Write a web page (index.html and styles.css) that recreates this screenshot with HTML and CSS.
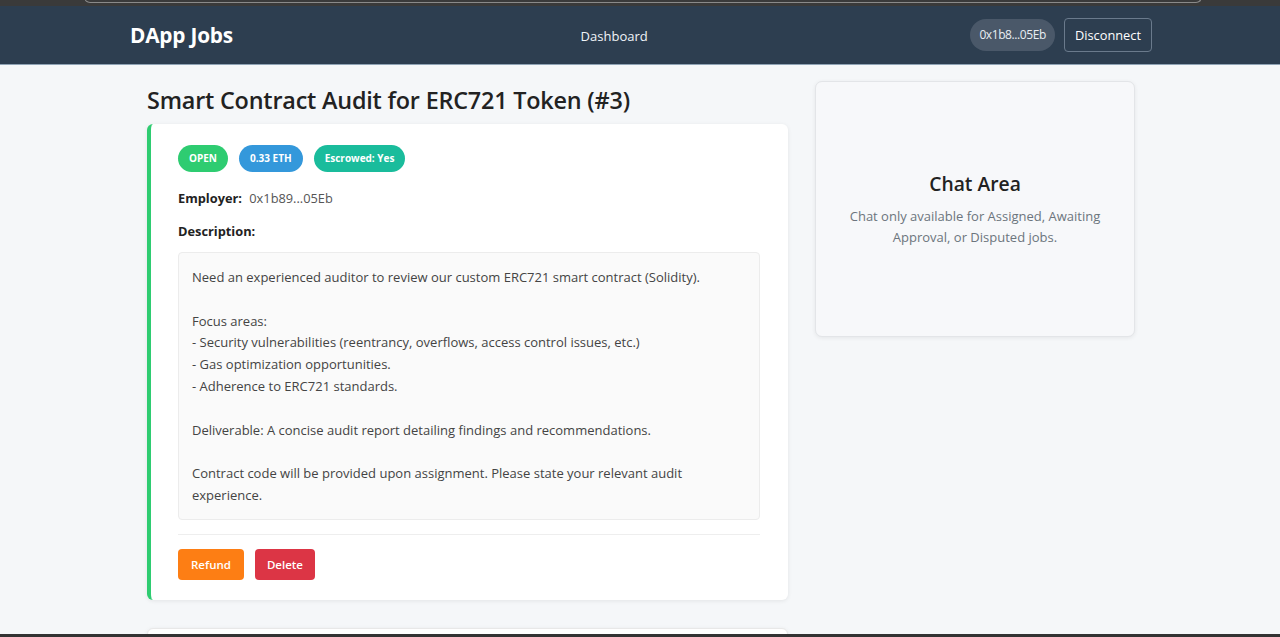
FILE: index.html
```html
<!DOCTYPE html>
<html lang="en">
<head>
<meta charset="utf-8">
<title>DApp Jobs</title>
<link rel="stylesheet" href="styles.css">
</head>
<body>
<div class="chrome-top"><div class="chrome-bar"></div></div>
<header class="topnav">
  <div class="nav-inner">
    <a class="logo">DApp Jobs</a>
    <nav class="nav-links"><a>Dashboard</a></nav>
    <div class="nav-right">
      <span class="addr-pill">0x1b8...05Eb</span>
      <button class="btn-disconnect">Disconnect</button>
    </div>
  </div>
</header>
<main class="page">
  <div class="layout">
    <section class="main-col">
      <h1 class="job-title">Smart Contract Audit for ERC721 Token (#3)</h1>
      <div class="job-card">
        <div class="badges">
          <span class="badge badge-open">OPEN</span>
          <span class="badge badge-eth">0.33 ETH</span>
          <span class="badge badge-escrow">Escrowed: Yes</span>
        </div>
        <p class="meta"><strong>Employer:</strong> <span class="meta-val">0x1b89...05Eb</span></p>
        <p class="meta"><strong>Description:</strong></p>
        <div class="desc">Need an experienced auditor to review our custom ERC721 smart contract (Solidity).

Focus areas:
- Security vulnerabilities (reentrancy, overflows, access control issues, etc.)
- Gas optimization opportunities.
- Adherence to ERC721 standards.

Deliverable: A concise audit report detailing findings and recommendations.

Contract code will be provided upon assignment. Please state your relevant audit experience.</div>
        <div class="actions">
          <button class="btn btn-refund">Refund</button>
          <button class="btn btn-delete">Delete</button>
        </div>
      </div>
      <div class="job-card next-card"></div>
    </section>
    <aside class="side-col">
      <div class="chat-card">
        <h2 class="chat-title">Chat Area</h2>
        <p class="chat-note">Chat only available for Assigned, Awaiting Approval, or Disputed jobs.</p>
      </div>
    </aside>
  </div>
</main>
<div class="chrome-bottom"></div>
</body>
</html>
```

FILE: styles.css
```css
* { box-sizing: border-box; }
html, body { margin: 0; padding: 0; }
body {
  font-family: "Open Sans", "Noto Sans", sans-serif;
  background: #f5f7f9;
  color: #222;
  height: 637px;
  overflow: hidden;
  position: relative;
}
.chrome-top {
  height: 6px;
  background: #3a3a3a;
  position: relative;
}
.chrome-bar {
  position: absolute;
  left: 84px;
  right: 78px;
  top: -6px;
  height: 9px;
  border: 1px solid #8a8a8a;
  border-top: none;
  border-radius: 0 0 6px 6px;
  background: #3a3a3a;
}
.chrome-bottom {
  position: absolute;
  left: 0; right: 0; bottom: 0;
  height: 3px;
  background: #333;
}
.topnav {
  background: #2d3e50;
  height: 59px;
  border-bottom: 1px solid #8fa3b5;
  padding-left: 2px;
}
.nav-inner {
  width: 1022px;
  margin: 0 auto;
  height: 100%;
  display: flex;
  align-items: center;
  justify-content: space-between;
}
.logo {
  color: #fff;
  font-weight: 700;
  font-size: 20.8px;
  letter-spacing: -0.2px;
}
.nav-links { margin-left: 25px; }
.nav-links a {
  color: #f0f4f8;
  font-size: 13px;
}
.nav-right {
  display: flex;
  align-items: center;
  gap: 9px;
}
.addr-pill {
  background: #4a5869;
  color: #e8edf2;
  font-size: 12px;
  padding: 0 9px;
  height: 32px;
  line-height: 32px;
  border-radius: 16px;
  letter-spacing: -0.4px;
}
.btn-disconnect {
  font-family: inherit;
  background: transparent;
  color: #fff;
  border: 1px solid #6a7a8c;
  border-radius: 4px;
  font-size: 12.8px;
  height: 34px;
  padding: 0 10px;
}
.page { padding-top: 16px; padding-left: 2px; }
.layout {
  width: 988px;
  margin: 0 auto;
  display: grid;
  grid-template-columns: 641px 320px;
  gap: 27px;
  align-items: start;
}
.job-title {
  margin: 4px 0 9px;
  font-size: 23.4px;
  font-weight: 600;
  color: #222;
  line-height: 30px;
  letter-spacing: -0.2px;
}
.job-card {
  background: #fff;
  border-left: 4px solid #2ecc71;
  border-radius: 6px;
  box-shadow: 0 1px 4px rgba(0,0,0,0.08);
  padding: 21px 28px 20px 27px;
}
.next-card {
  margin-top: 28px;
  height: 40px;
  border: 1px solid #e8e8e8;
}
.badges { display: flex; gap: 11px; }
.badge {
  color: #fff;
  font-size: 10px;
  font-weight: 700;
  height: 27px;
  line-height: 27px;
  padding: 0 11px;
  border-radius: 14px;
}
.badge-open { background: #2ecc71; }
.badge-eth { background: #3498db; }
.badge-escrow { background: #1abc9c; }
.meta {
  margin: 15px 0 0;
  font-size: 12.8px;
  line-height: 22px;
}
.meta + .meta { margin-top: 11px; }
.meta strong { color: #222; font-weight: 700; margin-right: 4px; }
.meta-val { color: #555; }
.desc {
  margin-top: 10px;
  background: #fafafa;
  border: 1px solid #ececec;
  border-radius: 4px;
  padding: 14px 13px 12px;
  white-space: pre-wrap;
  font-size: 13px;
  line-height: 21.8px;
  color: #444;
}
.actions {
  margin-top: 14px;
  border-top: 1px solid #eee;
  padding-top: 14px;
  display: flex;
  gap: 11px;
}
.btn {
  font-family: inherit;
  border: none;
  border-radius: 4px;
  color: #fff;
  font-size: 11.5px;
  font-weight: 600;
  height: 31px;
  padding: 0 13px;
}
.btn-refund { background: #fd7e14; }
.btn-delete { background: #dc3545; padding: 0 12px; }
.chat-card {
  background: #f7f8fa;
  border: 1px solid #e3e5e8;
  border-radius: 7px;
  box-shadow: 0 1px 4px rgba(0,0,0,0.07);
  height: 256px;
  display: flex;
  flex-direction: column;
  align-items: center;
  justify-content: center;
  text-align: center;
  padding: 0 30px;
}
.chat-title {
  margin: 0 0 9px;
  font-size: 19.3px;
  font-weight: 600;
  color: #222;
}
.chat-note {
  margin: 0;
  font-size: 13px;
  line-height: 21px;
  color: #6c757d;
}
```
